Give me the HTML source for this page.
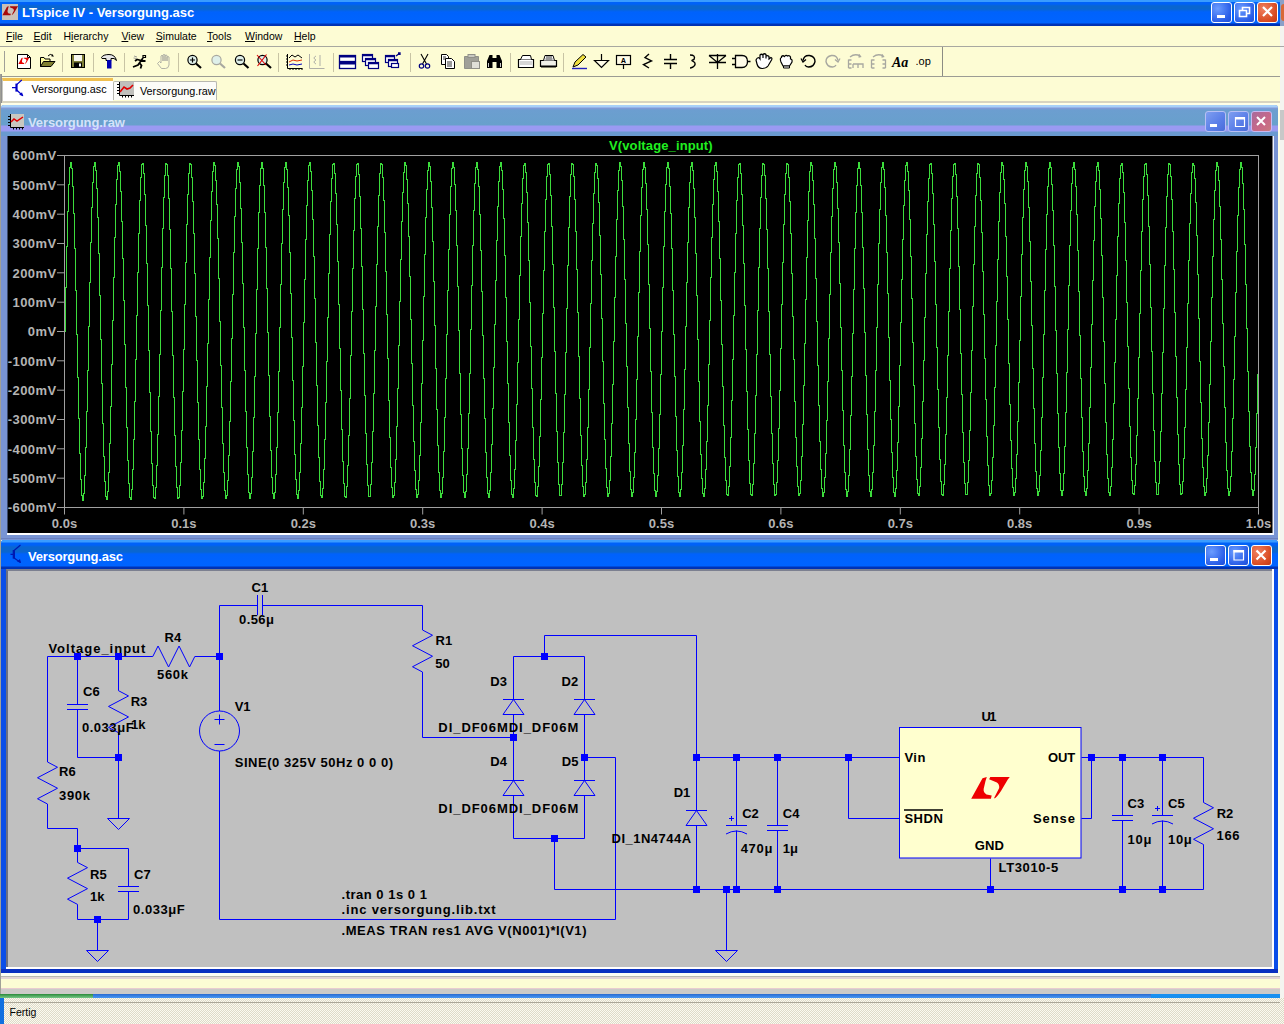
<!DOCTYPE html>
<html><head><meta charset="utf-8"><title>LTspice IV</title>
<style>
*{box-sizing:border-box}
body{margin:0;width:1284px;height:1024px;position:relative;overflow:hidden;background:#fffee6;font-family:"Liberation Sans",sans-serif}
.a{position:absolute}
.ttl{background:linear-gradient(to bottom,#3a9cff 0px,#3a9cff 2px,#0062f8 2px,#0062f8 4px,#0a66d0 6px,#0a66d0 9px,#0062fc 12px,#0064ff 23px,#0034b8 24px,#0030b0 26px)}
.btn{position:absolute;width:21px;height:21px;border:1px solid #fff;border-radius:3px;background:radial-gradient(circle at 30% 30%,#6a9cff,#2a5ee8 70%,#1e4fd8)}
.btn.cl{background:radial-gradient(circle at 30% 30%,#f08060,#d84a20 70%,#c03a18)}
.menu span{position:absolute;top:30px;font-size:10.5px}
.menu u{text-decoration:underline}
</style></head><body>
<!-- main title -->
<div class="a ttl" style="left:0;top:0;width:1280px;height:26px"></div>
<div class="a" style="left:2px;top:4px;width:16px;height:16px;background:#c8c0b8"></div>
<svg class="a" style="left:2px;top:4px" width="16" height="16"><g transform="translate(0.3 2.3) scale(0.41) translate(-971 -777)" fill="#a80808"><path d="M986.8 777.1L982.5 778.2L971.2 798.7L990.9 798.7L991.7 795.4L986.5 794.6Q983 792 983.7 788.7L985.5 781Z"/><path d="M989.1 779.2L990.3 777.1L1009.8 777.1L1007.8 779.4L1001 791Q997 797 994.6 798.5L994.2 797.7L999.2 788Q999.5 784 996.9 782.5Z"/></g></svg>
<div class="a" style="left:22px;top:5px;font:bold 13px 'Liberation Sans';color:#fff;white-space:nowrap">LTspice IV - Versorgung.asc</div>
<div class="btn" style="left:1211px;top:2px"></div>
<div class="btn" style="left:1234px;top:2px"></div>
<div class="btn cl" style="left:1257px;top:2px"></div>
<svg class="a" style="left:1211px;top:2px" width="67" height="21">
<rect x="6" y="13" width="8" height="3" fill="#fff"/>
<path d="M28.5 8.5h7v6h-7z M31.5 8.5V5.5h7v6h-3" fill="none" stroke="#fff" stroke-width="1.6"/>
<path d="M52 5L61 14M61 5L52 14" stroke="#fff" stroke-width="2.2"/>
</svg>
<!-- menu -->
<div class="a" style="left:0;top:26px;width:1280px;height:20px;background:#fdfcd4"></div>
<div class="a" style="left:0;top:46px;width:1280px;height:1px;background:#a8a8a0"></div>
<div class="menu">
<span style="left:6px"><u>F</u>ile</span><span style="left:33.5px"><u>E</u>dit</span><span style="left:63.5px">H<u>i</u>erarchy</span>
<span style="left:121.5px"><u>V</u>iew</span><span style="left:155.8px"><u>S</u>imulate</span><span style="left:207px"><u>T</u>ools</span>
<span style="left:245px"><u>W</u>indow</span><span style="left:294px"><u>H</u>elp</span>
</div>
<!-- toolbar -->
<div class="a" style="left:0;top:47px;width:1280px;height:30px;background:#fdfcd4"></div>
<div class="a" style="left:0;top:76px;width:1280px;height:1px;background:#9c9c94"></div>
<div class="a" style="left:4px;top:51px;width:1px;height:21px;background:#a0a098"></div>
<div id="tb"></div>
<!-- tabs -->
<div class="a" style="left:0;top:77px;width:1280px;height:26px;background:#fdfcd4"></div>
<div class="a" style="left:2px;top:78px;width:111px;height:23px;background:#fff;border-top:3px solid #f0c050;border-left:1px solid #c8c8c0"></div>
<div class="a" style="left:113px;top:81px;width:104px;height:19px;background:#fcfcf8;border:1px solid #b8b8b0;border-bottom:none;border-radius:2px 2px 0 0"></div>
<div class="a" style="left:31.5px;top:83px;font-size:10.8px;white-space:nowrap">Versorgung.asc</div>
<svg class="a" style="left:10px;top:79px" width="16" height="18"><path d="M6.4 5.9L11.8 1M2 8.6H6.4M6.4 10.8L12.9 16.8" stroke="#0000c8" stroke-width="1.2" fill="none"/><rect x="5.4" y="4.6" width="2.2" height="8" fill="#0000c8"/><path d="M9.2 15.8L13.2 17.3L12 13.2Z" fill="#0000c8"/></svg>
<svg class="a" style="left:117px;top:82px" width="18" height="16"><rect x="2" y="0" width="15" height="13" fill="#c0c0bc"/><path d="M2.5 0V13.5H17" stroke="#000" fill="none"/><path d="M0 2.5h2M0 5.5h2M0 8.5h2M0 11.5h2M5.5 13.5v2M8.5 13.5v2M11.5 13.5v2M14.5 13.5v2" stroke="#000"/><path d="M3 10L7 5L10 7L13 6L16 3" stroke="#e00000" stroke-width="1.6" fill="none"/></svg>
<div class="a" style="left:140px;top:85px;font-size:10.8px;white-space:nowrap">Versorgung.raw</div>
<div class="a" style="left:0;top:101px;width:1280px;height:2px;background:#d8d4c0"></div><div class="a" style="left:0;top:103px;width:1280px;height:2px;background:#fcfcf4"></div><div class="a" style="left:0;top:74px;width:2px;height:930px;background:#909090"></div>
<!-- raw window -->
<div class="a" style="left:1px;top:103px;width:1279px;height:893px;background:#fffee6"></div>
<div class="a" style="left:1px;top:105px;width:1277px;height:435px;background:#7894d4;border-radius:3px 3px 0 0"></div>
<div class="a" style="left:1px;top:105px;width:1277px;height:31px;background:linear-gradient(to bottom,#a8d0f8 0px,#a8d0f8 2px,#8498d8 3px,#6c9ed0 5px,#68a0cc 20px,#9a9af2 21px,#9a9af2 26px,#6a9ad0 27px,#6a9ad0 31px);border-radius:3px 3px 0 0"></div>
<div class="a" style="left:28px;top:115px;font:bold 13px 'Liberation Sans';color:#d4e2fa;white-space:nowrap;letter-spacing:-0.1px">Versorgung.raw</div>
<svg class="a" style="left:8px;top:113px" width="17" height="17"><rect x="2" y="1" width="14" height="13" fill="#c8c8c0"/><path d="M2.5 1V14.5H16" stroke="#000" fill="none"/><path d="M0 3.5h2M0 6.5h2M0 9.5h2M0 12.5h2M5.5 14.5v2M8.5 14.5v2M11.5 14.5v2M14.5 14.5v2" stroke="#000"/><path d="M3 9L6 6L9 8L15 4" stroke="#e00000" stroke-width="1.5" fill="none"/></svg>
<div class="btn" style="left:1205px;top:111px;width:21px;height:21px;border-color:#b8c0f4;background:linear-gradient(135deg,#7e9ef0,#5a7ee8 60%,#4a6cd8)"></div>
<div class="btn" style="left:1228px;top:111px;width:21px;height:21px;border-color:#b8c0f4;background:linear-gradient(135deg,#7e9ef0,#5a7ee8 60%,#4a6cd8)"></div>
<div class="btn" style="left:1251px;top:111px;width:21px;height:21px;border-color:#c8b8f0;background:linear-gradient(135deg,#a86a9c,#c86888 60%,#c87a80)"></div>
<svg class="a" style="left:1205px;top:111px" width="67" height="21">
<rect x="5" y="13" width="7" height="3" fill="#fff"/>
<path d="M30.5 6.5h9v9h-9z" fill="none" stroke="#fff" stroke-width="1.2"/><rect x="30" y="6" width="10" height="2.5" fill="#fff"/>
<path d="M52 6L60 14M60 6L52 14" stroke="#fff" stroke-width="2"/>
</svg>
<div class="a" style="left:7px;top:533px;width:1267px;height:2px;background:#fff"></div>
<div class="a" style="left:1272px;top:136px;width:2px;height:399px;background:#f0f4ff"></div>
<div class="a" style="left:1px;top:538px;width:1277px;height:1px;background:#6a80c0"></div>
<!-- asc window -->
<div class="a" style="left:1px;top:540px;width:1277px;height:433px;background:#0a4ee8;border-radius:3px 3px 0 0"></div>
<div class="a" style="left:1px;top:969px;width:1277px;height:4px;background:#0a30c0"></div>
<div class="a" style="left:1px;top:540px;width:1277px;height:29px;border-radius:3px 3px 0 0;background:linear-gradient(to bottom,#3a9cff 0px,#3a9cff 2px,#0062f8 3px,#0062f8 5px,#0a66d0 7px,#0a66d0 12px,#0062fc 14px,#0064ff 26px,#0034b8 27px,#0030b0 29px)"></div>
<div class="a" style="left:28px;top:549px;font:bold 13px 'Liberation Sans';color:#fff;white-space:nowrap;letter-spacing:-0.2px">Versorgung.asc</div>
<svg class="a" style="left:9px;top:544px" width="14" height="20"><path d="M4.8 6.8L11.5 1M1.5 10.3H4.8M4.8 13.8L11.5 18.5" stroke="#0018b0" stroke-width="1.2" fill="none"/><rect x="3.7" y="6" width="2.3" height="8.6" fill="#0018b0"/><path d="M8 17.5L12 19L11 15Z" fill="#0018b0"/></svg>
<div class="btn" style="left:1205px;top:545px;width:21px;height:21px"></div>
<div class="btn" style="left:1228px;top:545px;width:21px;height:21px"></div>
<div class="btn cl" style="left:1251px;top:545px;width:21px;height:21px"></div>
<svg class="a" style="left:1205px;top:545px" width="67" height="21">
<rect x="5" y="13" width="8" height="3" fill="#fff"/>
<path d="M29 5.5h9.5v9.5h-9.5z" fill="none" stroke="#fff" stroke-width="1.2"/><rect x="28.5" y="5" width="10.5" height="2.5" fill="#fff"/>
<path d="M51.5 5.5L60.5 14.5M60.5 5.5L51.5 14.5" stroke="#fff" stroke-width="2.2"/>
</svg>
<div class="a" style="left:6px;top:569px;width:1268px;height:400px;background:#fff"></div>
<div class="a" style="left:6px;top:569px;width:1266px;height:398px;background:#c0c0c0;border-top:2px solid #7c8090;border-left:2px solid #6c7080"></div>
<!-- bottom strip -->
<div class="a" style="left:0;top:973px;width:1280px;height:25px;background:#fcfcf4"></div>
<div class="a" style="left:0;top:976px;width:1280px;height:1px;background:#b8b8b0"></div>
<div class="a" style="left:0;top:977px;width:1280px;height:2px;background:#e4d4d4"></div>
<div class="a" style="left:0;top:979px;width:1280px;height:9px;background:#fcfcd4"></div>
<div class="a" style="left:0;top:988px;width:1280px;height:1px;background:#e8ccd0"></div>
<div class="a" style="left:0;top:989px;width:1280px;height:5px;background:#cccac8"></div>
<div class="a" style="left:0;top:994px;width:1280px;height:4px;background:linear-gradient(#2a6ad0,#4898f4)"></div>
<div class="a" style="left:1151px;top:994px;width:129px;height:4px;background:#1890f0"></div>
<div class="a" style="left:0;top:994px;width:93px;height:4px;background:linear-gradient(#2a8a3a,#78c888)"></div>
<!-- status -->
<div class="a" style="left:0;top:998px;width:1284px;height:26px;background:repeating-conic-gradient(#dedac8 0 25%,#fbfaf0 0 50%) 0 0/2px 2px"></div>
<div class="a" style="left:0;top:1002px;width:1280px;height:1px;background:#aaa698"></div>
<div class="a" style="left:0;top:998px;width:4px;height:26px;background:#1070e0"></div>
<div class="a" style="left:9.5px;top:1006px;font-size:10.5px">Fertig</div>
<div class="a" style="left:0;top:74px;width:1px;height:920px;background:#a0a098"></div>
<div class="a" style="left:1280px;top:0;width:4px;height:26px;background:#8aa0c8"></div><div class="a" style="left:1281px;top:4px;width:3px;height:17px;background:#d86838;border-radius:3px 0 0 3px"></div><div class="a" style="left:1280px;top:88px;width:4px;height:15px;background:#607898"></div>
<div class="a" style="left:1280px;top:26px;width:4px;height:972px;background:#f4f4f0"></div>
<div class="a" style="left:1280px;top:46px;width:4px;height:1px;background:#a8a8a8"></div>
<div class="a" style="left:1280px;top:110px;width:4px;height:30px;background:#c8c8c8"></div>
<!-- big svg overlay -->
<svg class="a" style="left:0;top:0" width="1284" height="1024" viewBox="0 0 1284 1024">
<path d="M62.5 53V72" stroke="#c8c4a4" stroke-width="1"/><path d="M93.5 53V72" stroke="#c8c4a4" stroke-width="1"/><path d="M124.5 53V72" stroke="#c8c4a4" stroke-width="1"/><path d="M178.5 53V72" stroke="#c8c4a4" stroke-width="1"/><path d="M278.5 53V72" stroke="#c8c4a4" stroke-width="1"/><path d="M333.5 53V72" stroke="#c8c4a4" stroke-width="1"/><path d="M410.5 53V72" stroke="#c8c4a4" stroke-width="1"/><path d="M510.5 53V72" stroke="#c8c4a4" stroke-width="1"/><path d="M563.5 53V72" stroke="#c8c4a4" stroke-width="1"/><path d="M942.5 47V76" stroke="#8c8c84" stroke-width="1"/><path d="M17.5 54.5H27.5L30.5 57.5V68.5H17.5Z" fill="#fff" stroke="#000"/><path d="M27.5 54.5V57.5H30.5" fill="none" stroke="#000"/><g transform="translate(18.3 57.6) scale(0.29) translate(-971 -777)" fill="#e80000"><path d="M986.8 777.1L982.5 778.2L971.2 798.7L990.9 798.7L991.7 795.4L986.5 794.6Q983 792 983.7 788.7L985.5 781Z"/><path d="M989.1 779.2L990.3 777.1L1009.8 777.1L1007.8 779.4L1001 791Q997 797 994.6 798.5L994.2 797.7L999.2 788Q999.5 784 996.9 782.5Z"/></g><path d="M40.5 57.5H44L45 59H50V66.5H40.5Z" fill="#ffffa0" stroke="#000"/><path d="M40.5 66.5L43.5 61.5H55L51 66.5Z" fill="#808030" stroke="#000"/><path d="M48 56Q50 53 53 55.5" fill="none" stroke="#000"/><path d="M52 54L54 56.5L51.5 56.5Z" fill="#000"/><rect x="71.5" y="54.5" width="13" height="13" fill="#808038" stroke="#000"/><rect x="74" y="55" width="8" height="6" fill="#f8f8f0"/><rect x="74" y="62.5" width="8" height="4.5" fill="#000"/><rect x="79" y="63.5" width="2" height="3" fill="#fff"/><path d="M101.5 57.5Q103 54.5 109 54.5Q115 54.5 116.5 60.5L114 58.5L111 58.5V60.5H106V58.5L102 58.5Z" fill="#e8e8e8" stroke="#000"/><rect x="107" y="60" width="4.5" height="8.5" fill="#0000b0"/><path d="M143 55.5h2.5v2h-2.5z" fill="none" stroke="#000" stroke-width="1.2"/><path d="M143 58L138 65L133 67 M141 60.5L137 59.5L135 61 M139.5 63L141.5 65.5L140.5 68.5 M141 61L145.5 61" fill="none" stroke="#000" stroke-width="1.8"/><path d="M134 56l3 1M133.5 58l3 0.5" stroke="#888" stroke-width="0.8"/><path d="M157.5 63.5L159.5 61.5L161 63V56Q162 54.5 163 56V61V55Q164 53.8 165 55V61V55.5Q166 54.5 167 55.5V61V57Q168 56 169 57V65Q168.5 68.5 165.5 68.5H161.5Z" fill="none" stroke="#a8a8a0" stroke-width="0.9"/><circle cx="192.5" cy="60" r="4.6" fill="#dff0ea" stroke="#000" stroke-width="1.2"/><path d="M196.0 63.5L201.0 68" stroke="#000" stroke-width="2.2"/><path d="M190 60h5M192.5 57.5v5" stroke="#000" stroke-width="1.2"/><circle cx="216.5" cy="60" r="4.6" fill="#dff0ea" stroke="#a8a8a0" stroke-width="1.2"/><path d="M220.0 63.5L225.0 68" stroke="#a8a8a0" stroke-width="2.2"/><circle cx="240" cy="60" r="4.6" fill="#dff0ea" stroke="#000" stroke-width="1.2"/><path d="M243.5 63.5L248.5 68" stroke="#000" stroke-width="2.2"/><path d="M237.5 60h5" stroke="#000" stroke-width="1.2"/><circle cx="262.5" cy="60" r="4.6" fill="#dff0ea" stroke="#000" stroke-width="1.2"/><path d="M266.0 63.5L271.0 68" stroke="#000" stroke-width="2.2"/><path d="M257 55L266 65M266.5 54.5L257.5 66" stroke="#e00000" stroke-width="1.1"/><path d="M287.5 54V68.5H302.5" fill="none" stroke="#000"/><path d="M286 56h1.5M286 59h1.5M286 62h1.5M286 65h1.5M290 68.5v1.5M293 68.5v1.5M296 68.5v1.5M299 68.5v1.5M302 68.5v1.5" stroke="#000"/><path d="M289 58L292 55L295 57L298 55L302 58" fill="none" stroke="#000"/><path d="M289 62L293 60L297 61L302 60" fill="none" stroke="#e03000"/><path d="M289 65L293 64L297 65L302 64" fill="none" stroke="#0000c0"/><path d="M309.5 54V68.5H324.5" fill="none" stroke="#b0b0a8"/><path d="M316 56Q312 58 316 60Q312 62 316 64M320 55v11" fill="none" stroke="#b0b0a8"/><rect x="339.5" y="55.5" width="16" height="6" fill="#fff" stroke="#000080" stroke-width="1.3"/><rect x="339.5" y="62.5" width="16" height="6" fill="#fff" stroke="#000080" stroke-width="1.3"/><path d="M339.5 56.5h16M339.5 63.5h16" stroke="#000080" stroke-width="2"/><rect x="362.5" y="54.5" width="10" height="7" fill="#fff" stroke="#000080" stroke-width="1.2"/><rect x="365.5" y="58.5" width="10" height="7" fill="#fff" stroke="#000080" stroke-width="1.2"/><rect x="368.5" y="62.5" width="10" height="6" fill="#fff" stroke="#000080" stroke-width="1.2"/><path d="M362.5 55.5h10M365.5 59.5h10M368.5 63.5h10" stroke="#000080" stroke-width="1.6"/><rect x="385.5" y="55.5" width="9" height="7" fill="#fff" stroke="#000080" stroke-width="1.2"/><rect x="388.5" y="59.5" width="9" height="7" fill="#fff" stroke="#000080" stroke-width="1.2"/><rect x="391.5" y="63.5" width="7" height="4" fill="#fff" stroke="#000080" stroke-width="1.2"/><path d="M385.5 56.5h9M388.5 60.5h9M396 56L400 53M398 53h2v2" stroke="#000080" stroke-width="1.3" fill="none"/><path d="M421 54L426.5 64M428 54L422.5 64" stroke="#000" stroke-width="1.1"/><circle cx="421.5" cy="66" r="2.2" fill="none" stroke="#000080" stroke-width="1.2"/><circle cx="427.5" cy="66" r="2.2" fill="none" stroke="#000080" stroke-width="1.2"/><path d="M441.5 54.5H446.5L448.5 56.5V64.5H441.5Z" fill="#fff" stroke="#000"/><path d="M445.5 58.5H451.5L454.5 61.5V68.5H445.5Z" fill="#fff" stroke="#000"/><path d="M443 57h3M443 59h2M447 62h5M447 64h5M447 66h5" stroke="#000" stroke-width="0.8"/><path d="M464.5 56.5H478.5V68.5H464.5Z" fill="#a0a098" stroke="#909088"/><rect x="468" y="54.5" width="7" height="3" fill="#c8c8c0" stroke="#909088"/><rect x="471.5" y="61.5" width="8" height="7" fill="#e0e0d8" stroke="#909088"/><path d="M487 68V61L489.5 55H492.5V68Z M502 68V61L499.5 55H496.5V68Z" fill="#000"/><rect x="492" y="58" width="5" height="4" fill="#000"/><path d="M488.5 63v4M500.5 63v4" stroke="#fff" stroke-width="0.8"/><path d="M518.5 59.5H533.5V67.5H518.5Z" fill="#fff" stroke="#000" stroke-width="1.2"/><path d="M520.5 59.5L522.5 55.5H530.5L531.5 59.5" fill="#fff" stroke="#000"/><path d="M520 62h12M520 64h12" stroke="#999" stroke-width="0.8"/><path d="M540.5 60.5H556.5V66.5H540.5Z" fill="#f0f0e8" stroke="#000" stroke-width="1.2"/><path d="M543.5 60.5L545 55.5H553L554.5 60.5" fill="#fff" stroke="#000"/><path d="M541 66.5h15" stroke="#000" stroke-width="2"/><path d="M546 57h6M545.5 59h7" stroke="#000" stroke-width="0.8"/><path d="M573 67L575 62L583 54.5L586 57L578 65Z" fill="#f0e040" stroke="#000"/><path d="M572 68.5H587" stroke="#2020c0" stroke-width="1.4"/><path d="M601.5 54V60M594.5 60.5H608.5L601.5 67.5Z" fill="#fffce8" stroke="#000" stroke-width="1.2"/><rect x="616.5" y="55.5" width="14" height="9" fill="#fffce8" stroke="#000" stroke-width="1.2"/><path d="M623.5 64.5V69" stroke="#000" stroke-width="1.2"/><text x="623.5" y="63" font-family="Liberation Mono" font-weight="bold" font-size="8" text-anchor="middle">A</text><path d="M649 54L645 57.5L651.5 61L643.5 64.5L649 68" fill="none" stroke="#000" stroke-width="1.4"/><path d="M670.5 54V59.5M664 59.5H677M664 63.5H677M670.5 63.5V69" fill="none" stroke="#000" stroke-width="1.4"/><path d="M690 55Q696 55 694 59.5Q690 60.5 693.5 61.5Q697 64 693 67Q691 68 690 68" fill="none" stroke="#000" stroke-width="1.4"/><path d="M709 55.5H726M709 55.5L717.5 62.5L726 55.5M709 62.5H726M717.5 54V69" fill="none" stroke="#000" stroke-width="1.3"/><path d="M735.5 55.5H742Q747.5 55.5 747.5 61.5Q747.5 67.5 742 67.5H735.5Z" fill="#fffce8" stroke="#000" stroke-width="1.3"/><path d="M732 58.5h3.5M732 64.5h3.5M747.5 61.5h3" stroke="#000" stroke-width="1.3"/><path d="M756 60Q758 56 760 59V55Q761.5 53.5 763 55V58V54.5Q764.5 53 766 54.5V58.5V56Q767.5 55 769 56.5V59L771 57.5Q772.5 58 771.5 60L768 66Q766 68.5 762 68.5Q758 68 757 64Z" fill="#fff" stroke="#000" stroke-width="1.2"/><path d="M781 62Q779.5 58 781.5 57.5V56.5Q783 55 784.5 56.5Q786 54.5 787.5 56Q789.5 55 790.5 57V59Q792.5 59 792 62L789.5 66H783Z" fill="#fff" stroke="#000" stroke-width="1.2"/><path d="M783.5 66h6v2h-6z" fill="#fff" stroke="#000"/><path d="M803 60.5Q804 55 809.5 55.5Q815 56.5 815 61.5Q814 67 808.5 67Q806 66.8 805 65" fill="none" stroke="#000" stroke-width="1.4"/><path d="M801 58.5L803 62L806 59.5" fill="none" stroke="#000" stroke-width="1.3"/><path d="M838 60.5Q837 55 831.5 55.5Q826 56.5 826 61.5Q827 67 832.5 67Q835 66.8 836 65" fill="none" stroke="#a8a8a0" stroke-width="1.4"/><path d="M840 58.5L838 62L835 59.5" fill="none" stroke="#a8a8a0" stroke-width="1.3"/><path d="M848.5 59.5V68M848.5 60h3M848.5 64h3M848.5 68h3M853 64v4M853 64h10v4M858 64v4M850 57Q855 53 860 56M859 54.5l1.5 2l-2 0.5" fill="none" stroke="#a8a8a0" stroke-width="1.3"/><path d="M871.5 59.5V68M871.5 60h3M871.5 64h3M871.5 68h3M885.5 59.5V68M885.5 60h-3M885.5 64h-3M885.5 68h-3M873 57Q878 53 883 56M882 54.5l1.5 2l-2 0.5" fill="none" stroke="#a8a8a0" stroke-width="1.3"/><text x="892" y="67" font-family="Liberation Serif" font-style="italic" font-weight="bold" font-size="14" fill="#000">Aa</text><text x="915.5" y="65" font-family="Liberation Sans" font-size="11" fill="#000">.op</text>
<rect x="7.5" y="136" width="1265" height="397" fill="#000"/><rect x="64.5" y="155.5" width="1194" height="352" fill="none" stroke="#a0a0a0" stroke-width="1"/><path d="M57 155.5L64.5 155.5M57 184.8L64.5 184.8M57 214.2L64.5 214.2M57 243.5L64.5 243.5M57 272.8L64.5 272.8M57 302.2L64.5 302.2M57 331.5L64.5 331.5M57 360.8L64.5 360.8M57 390.2L64.5 390.2M57 419.5L64.5 419.5M57 448.8L64.5 448.8M57 478.2L64.5 478.2M57 507.5L64.5 507.5M64.5 507.5L64.5 514.5M183.9 507.5L183.9 514.5M303.3 507.5L303.3 514.5M422.7 507.5L422.7 514.5M542.1 507.5L542.1 514.5M661.5 507.5L661.5 514.5M780.9 507.5L780.9 514.5M900.3 507.5L900.3 514.5M1019.7 507.5L1019.7 514.5M1139.1 507.5L1139.1 514.5M1258.5 507.5L1258.5 514.5" stroke="#a0a0a0" stroke-width="1"/><g font-family="Liberation Sans" font-weight="bold" font-size="13" fill="#b4b4b4"><text x="56.5" y="160.2" text-anchor="end" letter-spacing="0.4">600mV</text><text x="56.5" y="189.5" text-anchor="end" letter-spacing="0.4">500mV</text><text x="56.5" y="218.9" text-anchor="end" letter-spacing="0.4">400mV</text><text x="56.5" y="248.2" text-anchor="end" letter-spacing="0.4">300mV</text><text x="56.5" y="277.5" text-anchor="end" letter-spacing="0.4">200mV</text><text x="56.5" y="306.9" text-anchor="end" letter-spacing="0.4">100mV</text><text x="56.5" y="336.2" text-anchor="end" letter-spacing="0.4">0mV</text><text x="56.5" y="365.5" text-anchor="end" letter-spacing="0.4">-100mV</text><text x="56.5" y="394.9" text-anchor="end" letter-spacing="0.4">-200mV</text><text x="56.5" y="424.2" text-anchor="end" letter-spacing="0.4">-300mV</text><text x="56.5" y="453.5" text-anchor="end" letter-spacing="0.4">-400mV</text><text x="56.5" y="482.9" text-anchor="end" letter-spacing="0.4">-500mV</text><text x="56.5" y="512.2" text-anchor="end" letter-spacing="0.4">-600mV</text><text x="64.5" y="527.7" text-anchor="middle">0.0s</text><text x="183.9" y="527.7" text-anchor="middle">0.1s</text><text x="303.3" y="527.7" text-anchor="middle">0.2s</text><text x="422.7" y="527.7" text-anchor="middle">0.3s</text><text x="542.1" y="527.7" text-anchor="middle">0.4s</text><text x="661.5" y="527.7" text-anchor="middle">0.5s</text><text x="780.9" y="527.7" text-anchor="middle">0.6s</text><text x="900.3" y="527.7" text-anchor="middle">0.7s</text><text x="1019.7" y="527.7" text-anchor="middle">0.8s</text><text x="1139.1" y="527.7" text-anchor="middle">0.9s</text><text x="1258.5" y="527.7" text-anchor="middle">1.0s</text></g><path d="M65.5 287V332M66.5 246V288M67.5 211V247M68.5 184V212M69.5 167V185M70.5 162V168M71.5 162V169M72.5 168V187M73.5 186V214M74.5 213V249M75.5 248V291M76.5 290V335M77.5 334V378M78.5 377V419M79.5 418V454M80.5 453V480M81.5 479V496M82.5 495V501M83.5 493V501M84.5 475V494M85.5 447V476M86.5 411V448M87.5 370V412M88.5 326V371M89.5 282V327M90.5 242V283M91.5 207V243M92.5 182V208M93.5 166V183M94.5 162V167M95.5 162V171M96.5 170V189M97.5 188V218M98.5 217V254M99.5 253V296M100.5 295V340M101.5 339V384M102.5 383V424M103.5 423V457M104.5 456V482M105.5 481V497M106.5 496V500M107.5 491V500M108.5 472V492M109.5 443V473M110.5 406V444M111.5 364V407M112.5 320V365M113.5 277V321M114.5 237V278M115.5 204V238M116.5 179V205M117.5 165V180M118.5 162V166M119.5 162V172M120.5 171V192M121.5 191V222M122.5 221V259M123.5 258V301M124.5 300V345M125.5 344V388M126.5 387V428M127.5 427V461M128.5 460V484M129.5 483V498M130.5 497V500M131.5 489V500M132.5 469V490M133.5 439V470M134.5 401V440M135.5 359V402M136.5 315V360M137.5 272V316M138.5 233V273M139.5 200V234M140.5 177V201M141.5 164V178M142.5 163V165M143.5 163V174M144.5 173V195M145.5 194V226M146.5 225V264M147.5 263V306M148.5 305V351M149.5 350V393M150.5 392V432M151.5 431V464M152.5 463V486M153.5 485V498M154.5 497V499M155.5 487V499M156.5 465V488M157.5 434V466M158.5 396V435M159.5 354V397M160.5 310V355M161.5 267V311M162.5 228V268M163.5 197V229M164.5 175V198M165.5 163V176M166.5 163V165M167.5 164V176M168.5 175V199M169.5 198V230M170.5 229V269M171.5 268V312M172.5 311V356M173.5 355V398M174.5 397V436M175.5 435V467M176.5 466V488M177.5 487V499M178.5 497V499M179.5 485V498M180.5 462V486M181.5 430V463M182.5 391V431M183.5 349V392M184.5 304V350M185.5 262V305M186.5 224V263M187.5 194V225M188.5 173V195M189.5 163V174M190.5 163V165M191.5 164V178M192.5 177V202M193.5 201V234M194.5 233V274M195.5 273V317M196.5 316V361M197.5 360V403M198.5 402V440M199.5 439V470M200.5 469V490M201.5 489V499M202.5 496V499M203.5 482V497M204.5 458V483M205.5 426V459M206.5 386V427M207.5 343V387M208.5 299V344M209.5 257V300M210.5 220V258M211.5 191V221M212.5 171V192M213.5 162V172M214.5 162V166M215.5 165V181M216.5 180V205M217.5 204V239M218.5 238V279M219.5 278V322M220.5 321V366M221.5 365V408M222.5 407V444M223.5 443V473M224.5 472V491M225.5 490V499M226.5 495V499M227.5 480V496M228.5 455V481M229.5 421V456M230.5 381V422M231.5 338V382M232.5 294V339M233.5 252V295M234.5 216V253M235.5 188V217M236.5 169V189M237.5 162V170M238.5 162V167M239.5 166V183M240.5 182V209M241.5 208V243M242.5 242V284M243.5 283V328M244.5 327V371M245.5 370V412M246.5 411V448M247.5 447V475M248.5 474V493M249.5 492V499M250.5 493V499M251.5 477V494M252.5 451V478M253.5 417V452M254.5 376V418M255.5 333V377M256.5 289V334M257.5 248V290M258.5 212V249M259.5 185V213M260.5 168V186M261.5 162V169M262.5 162V169M263.5 168V186M264.5 185V213M265.5 212V248M266.5 247V289M267.5 288V333M268.5 332V376M269.5 375V417M270.5 416V451M271.5 450V478M272.5 477V494M273.5 493V499M274.5 492V499M275.5 474V493M276.5 447V475M277.5 412V448M278.5 371V413M279.5 327V372M280.5 284V328M281.5 243V285M282.5 209V244M283.5 182V210M284.5 167V183M285.5 162V168M286.5 162V170M287.5 169V188M288.5 187V216M289.5 215V253M290.5 252V294M291.5 293V338M292.5 337V381M293.5 380V421M294.5 420V455M295.5 454V480M296.5 479V495M297.5 494V499M298.5 490V499M299.5 472V491M300.5 443V473M301.5 407V444M302.5 366V408M303.5 322V367M304.5 279V323M305.5 239V280M306.5 205V240M307.5 180V206M308.5 165V181M309.5 162V166M310.5 162V172M311.5 171V191M312.5 190V220M313.5 219V257M314.5 256V299M315.5 298V343M316.5 342V386M317.5 385V426M318.5 425V458M319.5 457V482M320.5 481V496M321.5 495V498M322.5 488V498M323.5 469V489M324.5 439V470M325.5 402V440M326.5 361V403M327.5 317V362M328.5 273V318M329.5 234V274M330.5 201V235M331.5 178V202M332.5 164V179M333.5 163V165M334.5 163V174M335.5 173V194M336.5 193V225M337.5 224V262M338.5 261V305M339.5 304V349M340.5 348V391M341.5 390V430M342.5 429V462M343.5 461V484M344.5 483V497M345.5 496V498M346.5 486V498M347.5 465V487M348.5 435V466M349.5 398V436M350.5 355V399M351.5 311V356M352.5 268V312M353.5 230V269M354.5 198V231M355.5 176V199M356.5 164V177M357.5 163V165M358.5 163V175M359.5 174V197M360.5 196V229M361.5 228V267M362.5 266V310M363.5 309V354M364.5 353V396M365.5 395V434M366.5 433V465M367.5 464V486M368.5 485V497M369.5 496V497M370.5 484V497M371.5 462V485M372.5 431V463M373.5 393V432M374.5 350V394M375.5 306V351M376.5 264V307M377.5 226V265M378.5 195V227M379.5 173V196M380.5 163V174M381.5 163V165M382.5 164V178M383.5 177V201M384.5 200V233M385.5 232V272M386.5 271V315M387.5 314V359M388.5 358V401M389.5 400V438M390.5 437V468M391.5 467V488M392.5 487V498M393.5 495V498M394.5 482V496M395.5 459V483M396.5 426V460M397.5 388V427M398.5 345V389M399.5 301V346M400.5 259V302M401.5 221V260M402.5 192V222M403.5 172V193M404.5 162V173M405.5 162V166M406.5 165V180M407.5 179V204M408.5 203V237M409.5 236V277M410.5 276V320M411.5 319V364M412.5 363V406M413.5 405V442M414.5 441V471M415.5 470V490M416.5 489V498M417.5 494V498M418.5 480V495M419.5 455V481M420.5 422V456M421.5 383V423M422.5 340V384M423.5 296V341M424.5 254V297M425.5 217V255M426.5 189V218M427.5 170V190M428.5 162V171M429.5 162V167M430.5 166V182M431.5 181V208M432.5 207V242M433.5 241V282M434.5 281V326M435.5 325V369M436.5 368V410M437.5 409V446M438.5 445V473M439.5 472V491M440.5 490V498M441.5 493V498M442.5 477V494M443.5 451V478M444.5 417V452M445.5 378V418M446.5 334V379M447.5 290V335M448.5 249V291M449.5 214V250M450.5 186V215M451.5 168V187M452.5 162V169M453.5 162V168M454.5 167V185M455.5 184V211M456.5 210V246M457.5 245V287M458.5 286V331M459.5 330V374M460.5 373V415M461.5 414V449M462.5 448V476M463.5 475V493M464.5 492V498M465.5 491V498M466.5 474V492M467.5 448V475M468.5 413V449M469.5 373V414M470.5 329V374M471.5 285V330M472.5 245V286M473.5 210V246M474.5 183V211M475.5 167V184M476.5 162V168M477.5 162V170M478.5 169V187M479.5 186V215M480.5 214V251M481.5 250V292M482.5 291V336M483.5 335V379M484.5 378V419M485.5 418V453M486.5 452V478M487.5 477V494M488.5 493V498M489.5 490V498M490.5 472V491M491.5 444V473M492.5 408V445M493.5 367V409M494.5 324V368M495.5 280V325M496.5 240V281M497.5 206V241M498.5 181V207M499.5 166V182M500.5 162V167M501.5 162V171M502.5 170V190M503.5 189V219M504.5 218V256M505.5 255V298M506.5 297V342M507.5 341V384M508.5 383V423M509.5 422V456M510.5 455V481M511.5 480V495M512.5 494V498M513.5 488V498M514.5 469V489M515.5 440V470M516.5 404V441M517.5 362V405M518.5 319V363M519.5 275V320M520.5 236V276M521.5 203V237M522.5 178V204M523.5 165V179M524.5 163V166M525.5 163V173M526.5 172V193M527.5 192V223M528.5 222V261M529.5 260V303M530.5 302V347M531.5 346V389M532.5 388V428M533.5 427V460M534.5 459V483M535.5 482V496M536.5 495V497M537.5 486V497M538.5 466V487M539.5 436V467M540.5 399V437M541.5 357V400M542.5 313V358M543.5 270V314M544.5 231V271M545.5 199V232M546.5 176V200M547.5 164V177M548.5 163V165M549.5 163V175M550.5 174V196M551.5 195V227M552.5 226V265M553.5 264V308M554.5 307V352M555.5 351V394M556.5 393V432M557.5 431V463M558.5 462V485M559.5 484V496M560.5 495V496M561.5 484V496M562.5 462V485M563.5 432V463M564.5 394V433M565.5 352V395M566.5 308V353M567.5 265V309M568.5 227V266M569.5 196V228M570.5 174V197M571.5 163V175M572.5 163V165M573.5 164V177M574.5 176V200M575.5 199V232M576.5 231V270M577.5 269V313M578.5 312V357M579.5 356V399M580.5 398V436M581.5 435V466M582.5 465V487M583.5 486V497M584.5 494V497M585.5 482V495M586.5 459V483M587.5 427V460M588.5 389V428M589.5 347V390M590.5 303V348M591.5 260V304M592.5 223V261M593.5 193V224M594.5 172V194M595.5 163V173M596.5 163V166M597.5 165V179M598.5 178V203M599.5 202V236M600.5 235V275M601.5 274V319M602.5 318V362M603.5 361V404M604.5 403V440M605.5 439V469M606.5 468V488M607.5 487V497M608.5 493V497M609.5 480V494M610.5 456V481M611.5 423V457M612.5 384V424M613.5 341V385M614.5 297V342M615.5 256V298M616.5 219V257M617.5 190V220M618.5 170V191M619.5 162V171M620.5 162V167M621.5 166V181M622.5 180V207M623.5 206V240M624.5 239V280M625.5 279V324M626.5 323V367M627.5 366V408M628.5 407V444M629.5 443V472M630.5 471V490M631.5 489V497M632.5 492V497M633.5 477V493M634.5 452V478M635.5 419V453M636.5 379V420M637.5 336V380M638.5 292V337M639.5 251V293M640.5 215V252M641.5 187V216M642.5 169V188M643.5 162V170M644.5 162V168M645.5 167V184M646.5 183V210M647.5 209V245M648.5 244V285M649.5 284V329M650.5 328V372M651.5 371V413M652.5 412V448M653.5 447V474M654.5 473V491M655.5 490V497M656.5 491V497M657.5 475V492M658.5 448V476M659.5 414V449M660.5 374V415M661.5 331V375M662.5 287V332M663.5 246V288M664.5 211V247M665.5 184V212M666.5 167V185M667.5 162V168M668.5 162V169M669.5 168V187M670.5 186V214M671.5 213V249M672.5 248V291M673.5 290V335M674.5 334V377M675.5 376V417M676.5 416V451M677.5 450V477M678.5 476V493M679.5 492V497M680.5 489V497M681.5 472V490M682.5 445V473M683.5 409V446M684.5 369V410M685.5 326V370M686.5 282V327M687.5 242V283M688.5 207V243M689.5 182V208M690.5 166V183M691.5 162V167M692.5 162V171M693.5 170V189M694.5 188V218M695.5 217V254M696.5 253V296M697.5 295V340M698.5 339V382M699.5 381V422M700.5 421V455M701.5 454V479M702.5 478V494M703.5 493V497M704.5 488V497M705.5 469V489M706.5 441V470M707.5 405V442M708.5 364V406M709.5 320V365M710.5 277V321M711.5 237V278M712.5 204V238M713.5 179V205M714.5 165V180M715.5 162V166M716.5 162V172M717.5 171V192M718.5 191V222M719.5 221V259M720.5 258V301M721.5 300V345M722.5 344V387M723.5 386V426M724.5 425V458M725.5 457V481M726.5 480V495M727.5 494V496M728.5 486V496M729.5 466V487M730.5 437V467M731.5 400V438M732.5 359V401M733.5 315V360M734.5 272V316M735.5 233V273M736.5 200V234M737.5 177V201M738.5 164V178M739.5 163V165M740.5 163V174M741.5 173V195M742.5 194V226M743.5 225V264M744.5 263V306M745.5 305V350M746.5 349V392M747.5 391V430M748.5 429V461M749.5 460V484M750.5 483V495M751.5 494V496M752.5 484V496M753.5 463V485M754.5 433V464M755.5 395V434M756.5 354V396M757.5 310V355M758.5 267V311M759.5 228V268M760.5 197V229M761.5 175V198M762.5 163V176M763.5 163V165M764.5 164V176M765.5 175V199M766.5 198V230M767.5 229V269M768.5 268V312M769.5 311V355M770.5 354V397M771.5 396V434M772.5 433V464M773.5 463V485M774.5 484V496M775.5 494V496M776.5 482V495M777.5 460V483M778.5 428V461M779.5 390V429M780.5 348V391M781.5 304V349M782.5 262V305M783.5 224V263M784.5 194V225M785.5 173V195M786.5 163V174M787.5 163V165M788.5 164V178M789.5 177V202M790.5 201V234M791.5 233V274M792.5 273V317M793.5 316V360M794.5 359V402M795.5 401V438M796.5 437V467M797.5 466V487M798.5 486V496M799.5 493V496M800.5 480V494M801.5 456V481M802.5 424V457M803.5 385V425M804.5 343V386M805.5 299V344M806.5 257V300M807.5 220V258M808.5 191V221M809.5 171V192M810.5 162V172M811.5 162V166M812.5 165V181M813.5 180V205M814.5 204V239M815.5 238V279M816.5 278V322M817.5 321V366M818.5 365V406M819.5 405V442M820.5 441V470M821.5 469V489M822.5 488V497M823.5 492V497M824.5 477V493M825.5 453V478M826.5 420V454M827.5 381V421M828.5 338V382M829.5 294V339M830.5 252V295M831.5 216V253M832.5 188V217M833.5 169V189M834.5 162V170M835.5 162V167M836.5 166V183M837.5 182V209M838.5 208V243M839.5 242V284M840.5 283V328M841.5 327V371M842.5 370V411M843.5 410V446M844.5 445V473M845.5 472V490M846.5 489V497M847.5 491V497M848.5 475V492M849.5 449V476M850.5 415V450M851.5 376V416M852.5 333V377M853.5 289V334M854.5 248V290M855.5 212V249M856.5 185V213M857.5 168V186M858.5 162V169M859.5 162V169M860.5 168V186M861.5 185V213M862.5 212V248M863.5 247V289M864.5 288V333M865.5 332V376M866.5 375V415M867.5 414V450M868.5 449V476M869.5 475V492M870.5 491V497M871.5 489V497M872.5 472V490M873.5 445V473M874.5 411V446M875.5 370V412M876.5 327V371M877.5 284V328M878.5 243V285M879.5 209V244M880.5 182V210M881.5 167V183M882.5 162V168M883.5 162V170M884.5 169V188M885.5 187V216M886.5 215V253M887.5 252V294M888.5 293V338M889.5 337V381M890.5 380V420M891.5 419V453M892.5 452V478M893.5 477V493M894.5 492V497M895.5 488V497M896.5 470V489M897.5 442V471M898.5 406V443M899.5 365V407M900.5 322V366M901.5 279V323M902.5 239V280M903.5 205V240M904.5 180V206M905.5 165V181M906.5 162V166M907.5 162V172M908.5 171V191M909.5 190V220M910.5 219V257M911.5 256V299M912.5 298V343M913.5 342V386M914.5 385V424M915.5 423V457M916.5 456V480M917.5 479V494M918.5 493V496M919.5 486V496M920.5 467V487M921.5 438V468M922.5 401V439M923.5 360V402M924.5 317V361M925.5 273V318M926.5 234V274M927.5 201V235M928.5 178V202M929.5 164V179M930.5 163V165M931.5 163V174M932.5 173V194M933.5 193V225M934.5 224V262M935.5 261V305M936.5 304V348M937.5 347V390M938.5 389V428M939.5 427V460M940.5 459V482M941.5 481V495M942.5 494V496M943.5 484V496M944.5 464V485M945.5 434V465M946.5 397V435M947.5 355V398M948.5 311V356M949.5 268V312M950.5 230V269M951.5 198V231M952.5 176V199M953.5 164V177M954.5 163V165M955.5 163V175M956.5 174V197M957.5 196V229M958.5 228V267M959.5 266V310M960.5 309V354M961.5 353V395M962.5 394V433M963.5 432V463M964.5 462V484M965.5 483V495M966.5 494V495M967.5 482V495M968.5 460V483M969.5 430V461M970.5 392V431M971.5 350V393M972.5 306V351M973.5 264V307M974.5 226V265M975.5 195V227M976.5 173V196M977.5 163V174M978.5 163V165M979.5 164V178M980.5 177V201M981.5 200V233M982.5 232V272M983.5 271V315M984.5 314V359M985.5 358V400M986.5 399V437M987.5 436V466M988.5 465V486M989.5 485V496M990.5 493V496M991.5 480V494M992.5 457V481M993.5 425V458M994.5 387V426M995.5 345V388M996.5 301V346M997.5 259V302M998.5 221V260M999.5 192V222M1000.5 172V193M1001.5 162V173M1002.5 162V166M1003.5 165V180M1004.5 179V204M1005.5 203V237M1006.5 236V277M1007.5 276V320M1008.5 319V364M1009.5 363V405M1010.5 404V441M1011.5 440V469M1012.5 468V488M1013.5 487V496M1014.5 492V496M1015.5 478V493M1016.5 454V479M1017.5 421V455M1018.5 382V422M1019.5 340V383M1020.5 296V341M1021.5 254V297M1022.5 217V255M1023.5 189V218M1024.5 170V190M1025.5 162V171M1026.5 162V167M1027.5 166V182M1028.5 181V208M1029.5 207V242M1030.5 241V282M1031.5 281V326M1032.5 325V369M1033.5 368V409M1034.5 408V444M1035.5 443V472M1036.5 471V489M1037.5 488V496M1038.5 491V496M1039.5 475V492M1040.5 450V476M1041.5 417V451M1042.5 377V418M1043.5 334V378M1044.5 290V335M1045.5 249V291M1046.5 214V250M1047.5 186V215M1048.5 168V187M1049.5 162V169M1050.5 162V168M1051.5 167V185M1052.5 184V211M1053.5 210V246M1054.5 245V287M1055.5 286V331M1056.5 330V374M1057.5 373V414M1058.5 413V448M1059.5 447V474M1060.5 473V491M1061.5 490V496M1062.5 490V496M1063.5 473V491M1064.5 446V474M1065.5 412V447M1066.5 372V413M1067.5 329V373M1068.5 285V330M1069.5 245V286M1070.5 210V246M1071.5 183V211M1072.5 167V184M1073.5 162V168M1074.5 162V170M1075.5 169V187M1076.5 186V215M1077.5 214V251M1078.5 250V292M1079.5 291V336M1080.5 335V379M1081.5 378V418M1082.5 417V452M1083.5 451V477M1084.5 476V492M1085.5 491V496M1086.5 488V496M1087.5 470V489M1088.5 443V471M1089.5 407V444M1090.5 367V408M1091.5 324V368M1092.5 280V325M1093.5 240V281M1094.5 206V241M1095.5 181V207M1096.5 166V182M1097.5 162V167M1098.5 162V171M1099.5 170V190M1100.5 189V219M1101.5 218V256M1102.5 255V298M1103.5 297V342M1104.5 341V384M1105.5 383V423M1106.5 422V455M1107.5 454V479M1108.5 478V493M1109.5 492V496M1110.5 486V496M1111.5 467V487M1112.5 439V468M1113.5 403V440M1114.5 362V404M1115.5 319V363M1116.5 275V320M1117.5 236V276M1118.5 203V237M1119.5 178V204M1120.5 165V179M1121.5 163V166M1122.5 163V173M1123.5 172V193M1124.5 192V223M1125.5 222V261M1126.5 260V303M1127.5 302V347M1128.5 346V389M1129.5 388V427M1130.5 426V458M1131.5 457V481M1132.5 480V494M1133.5 493V495M1134.5 485V495M1135.5 464V486M1136.5 435V465M1137.5 398V436M1138.5 357V399M1139.5 313V358M1140.5 270V314M1141.5 231V271M1142.5 199V232M1143.5 176V200M1144.5 164V177M1145.5 163V165M1146.5 163V175M1147.5 174V196M1148.5 195V227M1149.5 226V265M1150.5 264V308M1151.5 307V352M1152.5 351V394M1153.5 393V431M1154.5 430V462M1155.5 461V483M1156.5 482V495M1157.5 494V495M1158.5 483V495M1159.5 461V484M1160.5 431V462M1161.5 393V432M1162.5 352V394M1163.5 308V353M1164.5 265V309M1165.5 227V266M1166.5 196V228M1167.5 174V197M1168.5 163V175M1169.5 163V165M1170.5 164V177M1171.5 176V200M1172.5 199V232M1173.5 231V270M1174.5 269V313M1175.5 312V357M1176.5 356V398M1177.5 397V435M1178.5 434V465M1179.5 464V485M1180.5 484V495M1181.5 493V495M1182.5 481V494M1183.5 458V482M1184.5 427V459M1185.5 389V428M1186.5 347V390M1187.5 303V348M1188.5 260V304M1189.5 223V261M1190.5 193V224M1191.5 172V194M1192.5 163V173M1193.5 163V166M1194.5 165V179M1195.5 178V203M1196.5 202V236M1197.5 235V275M1198.5 274V319M1199.5 318V362M1200.5 361V403M1201.5 402V439M1202.5 438V468M1203.5 467V487M1204.5 486V496M1205.5 492V496M1206.5 478V493M1207.5 455V479M1208.5 422V456M1209.5 384V423M1210.5 341V385M1211.5 297V342M1212.5 256V298M1213.5 219V257M1214.5 190V220M1215.5 170V191M1216.5 162V171M1217.5 162V167M1218.5 166V181M1219.5 180V207M1220.5 206V240M1221.5 239V280M1222.5 279V324M1223.5 323V367M1224.5 366V408M1225.5 407V443M1226.5 442V471M1227.5 470V489M1228.5 488V496M1229.5 491V496M1230.5 476V492M1231.5 451V477M1232.5 418V452M1233.5 379V419M1234.5 336V380M1235.5 292V337M1236.5 251V293M1237.5 215V252M1238.5 187V216M1239.5 169V188M1240.5 162V170M1241.5 162V168M1242.5 167V184M1243.5 183V210M1244.5 209V245M1245.5 244V285M1246.5 284V329M1247.5 328V372M1248.5 371V412M1249.5 411V447M1250.5 446V473M1251.5 472V490M1252.5 489V496M1253.5 490V496M1254.5 474V491M1255.5 447V475M1256.5 413V448M1257.5 374V414" fill="none" stroke="#3cdc3c" stroke-width="1"/><text x="609" y="150.3" textLength="103.6" lengthAdjust="spacing" font-family="Liberation Sans" font-weight="bold" font-size="13" fill="#20f020">V(voltage_input)</text>
<rect x="899.5" y="727.5" width="181.5" height="130.5" fill="#ffffcf" stroke="#0000ff" stroke-width="1"/><path d="M47.5 656.5L152.8 656.5M194.8 656.5L219.5 656.5M152.80 656.50L158.05 646.00L168.55 667.00L179.05 646.00L189.55 667.00L194.80 656.50M47.5 656.5L47.5 762M47.50 762.00L57.50 767.25L37.50 777.75L57.50 788.25L37.50 798.75L47.50 804.00M47.5 804L47.5 828.5M47.5 828.5L77.5 828.5M77.5 828.5L77.5 848.5M77.5 656.5L77.5 704.5M67.0 704.5L88.0 704.5M67.0 709.5L88.0 709.5M77.5 709.5L77.5 757.5M77.5 757.5L118.5 757.5M118.5 656.5L118.5 690.7M118.50 690.70L128.50 695.95L108.50 706.45L128.50 716.95L108.50 727.45L118.50 732.70M118.5 732.7L118.5 818.5M107.50 818.50L129.50 818.50L118.50 829.50L107.50 818.50M77.5 848.5L77.5 862.4M77.50 862.40L87.50 867.65L67.50 878.15L87.50 888.65L67.50 899.15L77.50 904.40M77.5 904.4L77.5 919.5M77.5 919.5L128.5 919.5M77.5 848.5L128.5 848.5M128.5 848.5L128.5 886.5M118.0 886.5L139.0 886.5M118.0 891.5L139.0 891.5M128.5 891.5L128.5 919.5M97.5 919.5L97.5 950.5M86.50 950.50L108.50 950.50L97.50 961.50L86.50 950.50M219.5 605.5L219.5 711M239.5 731A20 20 0 1 1 199.5 731A20 20 0 1 1 239.5 731M214.5 719.5L224.5 719.5M219.5 714.5L219.5 724.5M214.5 744.5L224.5 744.5M219.5 751L219.5 919.5M219.5 919.5L615.5 919.5M615.5 919.5L615.5 757.5M615.5 757.5L584.5 757.5M219.5 605.5L257.5 605.5M257.5 595L257.5 615M262.5 595L262.5 615M262.5 605.5L422.5 605.5M422.5 605.5L422.5 630M422.50 630.00L432.50 635.25L412.50 645.75L432.50 656.25L412.50 666.75L422.50 672.00M422.5 672L422.5 737.5M422.5 737.5L513.5 737.5M513.5 656.5L584.5 656.5M544.5 656.5L544.5 635.5M544.5 635.5L696.5 635.5M696.5 635.5L696.5 757.5M513.5 656.5L513.5 699.5M503.0 699.5L524.0 699.5M513.50 699.50L503.00 714.50L524.00 714.50L513.50 699.50M513.5 714.5L513.5 780.5M584.5 656.5L584.5 699.5M574.0 699.5L595.0 699.5M584.50 699.50L574.00 714.50L595.00 714.50L584.50 699.50M584.5 714.5L584.5 780.5M503.0 780.5L524.0 780.5M513.50 780.50L503.00 795.50L524.00 795.50L513.50 780.50M574.0 780.5L595.0 780.5M584.50 780.50L574.00 795.50L595.00 795.50L584.50 780.50M513.5 795.5L513.5 838.5M584.5 795.5L584.5 838.5M513.5 838.5L584.5 838.5M554.5 838.5L554.5 889.5M554.5 889.5L1203.5 889.5M696.5 757.5L696.5 810.5M686.0 810.5L707.0 810.5M696.50 810.50L686.00 825.50L707.00 825.50L696.50 810.50M696.5 825.5L696.5 889.5M696.5 757.5L899.5 757.5M736.5 757.5L736.5 825.5M726.0 825.5L747.0 825.5M726.0 834.0Q736.5 828.0 747.0 834.0M729.0 818.5L734.0 818.5M731.5 816.0L731.5 821.0M736.5 830.5L736.5 889.5M777.5 757.5L777.5 825.5M767.0 825.5L788.0 825.5M767.0 830.5L788.0 830.5M777.5 830.5L777.5 889.5M726.5 889.5L726.5 950.5M715.50 950.50L737.50 950.50L726.50 961.50L715.50 950.50M848.5 757.5L848.5 818.5M848.5 818.5L899.5 818.5M990.5 858.5L990.5 889.5M1081.5 757.5L1203.5 757.5M1203.5 757.5L1203.5 802.5M1203.50 802.50L1213.50 807.75L1193.50 818.25L1213.50 828.75L1193.50 839.25L1203.50 844.50M1203.5 844.5L1203.5 889.5M1081.5 818.5L1091.5 818.5M1091.5 818.5L1091.5 757.5M1122.5 757.5L1122.5 815.5M1112.0 815.5L1133.0 815.5M1112.0 820.5L1133.0 820.5M1122.5 820.5L1122.5 889.5M1162.5 757.5L1162.5 815.5M1152.0 815.5L1173.0 815.5M1152.0 824.0Q1162.5 818.0 1173.0 824.0M1155.0 808.5L1160.0 808.5M1157.5 806.0L1157.5 811.0M1162.5 820.5L1162.5 889.5" fill="none" stroke="#0000ff" stroke-width="1"/><g fill="#0000ff"><rect x="74" y="653" width="7" height="7"/><rect x="115" y="653" width="7" height="7"/><rect x="216" y="653" width="7" height="7"/><rect x="115" y="754" width="7" height="7"/><rect x="74" y="845" width="7" height="7"/><rect x="94" y="916" width="7" height="7"/><rect x="541" y="653" width="7" height="7"/><rect x="510" y="734" width="7" height="7"/><rect x="581" y="754" width="7" height="7"/><rect x="551" y="835" width="7" height="7"/><rect x="693" y="754" width="7" height="7"/><rect x="733" y="754" width="7" height="7"/><rect x="774" y="754" width="7" height="7"/><rect x="845" y="754" width="7" height="7"/><rect x="693" y="886" width="7" height="7"/><rect x="723" y="886" width="7" height="7"/><rect x="733" y="886" width="7" height="7"/><rect x="774" y="886" width="7" height="7"/><rect x="987" y="886" width="7" height="7"/><rect x="1088" y="754" width="7" height="7"/><rect x="1119" y="754" width="7" height="7"/><rect x="1159" y="754" width="7" height="7"/><rect x="1119" y="886" width="7" height="7"/><rect x="1159" y="886" width="7" height="7"/></g><g font-family="Liberation Sans" font-weight="bold" font-size="13" fill="#000"><text x="48.4" y="652.6" text-anchor="start" textLength="97" lengthAdjust="spacing">Voltage_input</text><text x="164.5" y="641.6" text-anchor="start">R4</text><text x="157" y="678.6" text-anchor="start" textLength="31" lengthAdjust="spacing">560k</text><text x="251.5" y="592.0" text-anchor="start">C1</text><text x="239" y="623.8" text-anchor="start" textLength="35" lengthAdjust="spacing">0.56μ</text><text x="83" y="695.6" text-anchor="start">C6</text><text x="81.9" y="731.6" text-anchor="start" textLength="51.7" lengthAdjust="spacing">0.033μF</text><text x="130.7" y="705.6" text-anchor="start">R3</text><text x="131" y="728.6" text-anchor="start">1k</text><text x="59" y="776.1" text-anchor="start">R6</text><text x="59" y="799.6" text-anchor="start" letter-spacing="0.7">390k</text><text x="90" y="878.6" text-anchor="start">R5</text><text x="90" y="900.6" text-anchor="start">1k</text><text x="134" y="878.6" text-anchor="start">C7</text><text x="133" y="913.6" text-anchor="start" textLength="51.7" lengthAdjust="spacing">0.033μF</text><text x="234.7" y="711.0" text-anchor="start">V1</text><text x="234.7" y="767.3" text-anchor="start" textLength="158.3" lengthAdjust="spacing">SINE(0 325V 50Hz 0 0 0)</text><text x="435.5" y="644.9" text-anchor="start">R1</text><text x="435.3" y="667.6" text-anchor="start">50</text><text x="490.3" y="686.0" text-anchor="start">D3</text><text x="561.5" y="686.0" text-anchor="start">D2</text><text x="438.3" y="731.9" text-anchor="start" textLength="140" lengthAdjust="spacing">DI_DF06MDI_DF06M</text><text x="490.3" y="766.4" text-anchor="start">D4</text><text x="561.8" y="766.4" text-anchor="start">D5</text><text x="438.3" y="812.8" text-anchor="start" textLength="140" lengthAdjust="spacing">DI_DF06MDI_DF06M</text><text x="673.7" y="797.0" text-anchor="start">D1</text><text x="611.5" y="843.3" text-anchor="start" textLength="79.6" lengthAdjust="spacing">DI_1N4744A</text><text x="742.2" y="817.6" text-anchor="start">C2</text><text x="740.7" y="853.2" text-anchor="start" letter-spacing="0.7">470μ</text><text x="782.8" y="817.6" text-anchor="start">C4</text><text x="782.8" y="853.2" text-anchor="start">1μ</text><text x="1127.6" y="808.0" text-anchor="start">C3</text><text x="1127.6" y="843.6" text-anchor="start" letter-spacing="0.7">10μ</text><text x="1168" y="808.0" text-anchor="start">C5</text><text x="1168" y="843.6" text-anchor="start" letter-spacing="0.7">10μ</text><text x="1216.7" y="817.6" text-anchor="start">R2</text><text x="1216.5" y="840.1" text-anchor="start" letter-spacing="0.7">166</text><text x="904.4" y="761.6" text-anchor="start" textLength="21" lengthAdjust="spacing">Vin</text><text x="904.4" y="822.6" text-anchor="start" textLength="38.5" lengthAdjust="spacing">SHDN</text><text x="998.6" y="872.0" text-anchor="start" textLength="59.7" lengthAdjust="spacing">LT3010-5</text><text x="341.5" y="898.9" text-anchor="start" textLength="85.4" lengthAdjust="spacing">.tran 0 1s 0 1</text><text x="341.5" y="914.3" text-anchor="start" textLength="154.2" lengthAdjust="spacing">.inc versorgung.lib.txt</text><text x="341.5" y="934.9" text-anchor="start" textLength="245" lengthAdjust="spacing">.MEAS TRAN res1 AVG V(N001)*I(V1)</text><text x="974.7" y="849.6" text-anchor="start" textLength="29.3" lengthAdjust="spacing">GND</text><text x="981.6" y="720.8" text-anchor="start" textLength="15" lengthAdjust="spacing">U1</text><text x="1048" y="761.6" text-anchor="start" textLength="27.3" lengthAdjust="spacing">OUT</text><text x="1033" y="822.6" text-anchor="start" textLength="42" lengthAdjust="spacing">Sense</text></g><line x1="904" y1="810" x2="943" y2="810" stroke="#000" stroke-width="1.5"/><g fill="#ee0000"><path d="M986.8 777.1L982.5 778.2L971.2 798.7L990.9 798.7L991.7 795.4L986.5 794.6Q983 792 983.7 788.7L985.5 781Z"/><path d="M989.1 779.2L990.3 777.1L1009.8 777.1L1007.8 779.4L1001 791Q997 797 994.6 798.5L994.2 797.7L999.2 788Q999.5 784 996.9 782.5Z"/></g>
</svg>
</body></html>
